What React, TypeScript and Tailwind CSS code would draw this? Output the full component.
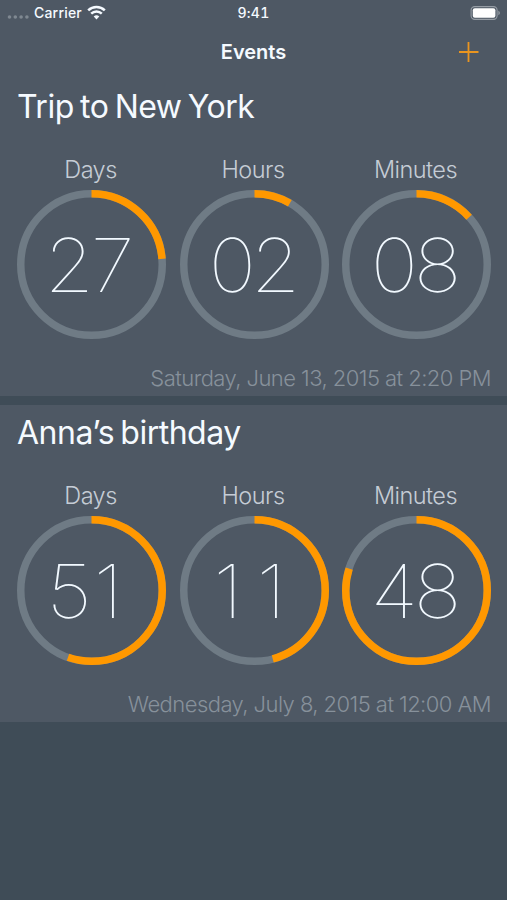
type Counter = {
  label: string;
  value: string;
  progress: number;
};

type CountdownEvent = {
  title: string;
  date: string;
  counters: Counter[];
};

const EVENTS: CountdownEvent[] = [
  {
    title: 'Trip to New York',
    date: 'Saturday, June 13, 2015 at 2:20 PM',
    counters: [
      { label: 'Days', value: '27', progress: 0.237 },
      { label: 'Hours', value: '02', progress: 2 / 24 },
      { label: 'Minutes', value: '08', progress: 8 / 60 },
    ],
  },
  {
    title: 'Anna’s birthday',
    date: 'Wednesday, July 8, 2015 at 12:00 AM',
    counters: [
      { label: 'Days', value: '51', progress: 0.554 },
      { label: 'Hours', value: '11', progress: 11 / 24 },
      { label: 'Minutes', value: '48', progress: 48 / 60 },
    ],
  },
];

// Fixed-width digit slots; the narrow 1 sits a little left of its slot's centre
const DIGIT_SCALE = 1.08;

function digitPositions(value: string) {
  return value
    .split('')
    .map((digit, i) => (52.3 + i * 43.3 - (digit === '1' ? 4.3 : 0)) / DIGIT_SCALE)
    .join(' ');
}

function StatusBar() {
  return (
    <div className="grid h-[26px] grid-cols-3 items-center px-[7px] text-[14px] font-medium">
      <div className="flex items-center">
        <svg width="22" height="4" viewBox="0 0 22 4" className="mt-2 fill-[#7f8891]">
          <circle cx="2.5" cy="2" r="1.8" />
          <circle cx="8.3" cy="2" r="1.8" />
          <circle cx="14.1" cy="2" r="1.8" />
          <circle cx="19.9" cy="2" r="1.8" />
        </svg>
        <span className="mb-px ml-[5px] tracking-[0.2px]">Carrier</span>
        <svg width="19" height="15" viewBox="0 0 19 15" className="mb-px ml-[5px]" fill="none" stroke="currentColor" strokeWidth="2.5">
          <path d="M1.2 5.4a11.9 11.9 0 0 1 16.6 0" />
          <path d="M4.2 8.6a7.6 7.6 0 0 1 10.6 0" />
          <path d="M9.5 14.4 6.7 11.5a4 4 0 0 1 5.6 0z" fill="currentColor" stroke="none" />
        </svg>
      </div>
      <span className="mb-px text-center tracking-[0.3px] tabular-nums">9:41</span>
      <svg width="30" height="14" viewBox="0 0 30 14" className="justify-self-end">
        <rect x="1.1" y="0.6" width="26" height="12.8" rx="3.6" fill="none" stroke="#969da5" strokeWidth="1.1" />
        <rect x="2.8" y="2.3" width="22.6" height="9.4" rx="2" fill="#fff" />
        <path d="M28.4 4.8c1.9.7 1.9 3.7 0 4.4z" fill="#969da5" />
      </svg>
    </div>
  );
}

function NavBar() {
  return (
    <div className="grid h-[52px] grid-cols-3 items-center px-7">
      <h1 className="col-start-2 text-center text-[20px] font-semibold">Events</h1>
      <button className="justify-self-end text-[#ea951f]" aria-label="Add event">
        <svg width="20" height="20" viewBox="0 0 20 20" stroke="currentColor" strokeWidth="1.8">
          <path d="M9.5 0v20M-.5 10h20" />
        </svg>
      </button>
    </div>
  );
}

function Ring({ value, progress }: { value: string; progress: number }) {
  return (
    <svg viewBox="0 0 149 149" className="block w-full" fill="none">
      <circle cx="74.5" cy="74.5" r="70.75" stroke="#6f7b85" strokeWidth="7.5" />
      <circle
        cx="74.5"
        cy="74.5"
        r="70.75"
        stroke="#ff9800"
        strokeWidth="7.5"
        pathLength={1}
        strokeDasharray={`${progress} 1`}
        transform="rotate(-90 74.5 74.5)"
      />
      <text
        x={digitPositions(value)}
        y="101.7"
        transform={`scale(${DIGIT_SCALE} 1)`}
        textAnchor="middle"
        fill="#f2f9ff"
        className="text-[74px] font-thin"
      >
        {value}
      </text>
    </svg>
  );
}

function EventCard({ event }: { event: CountdownEvent }) {
  return (
    <section className="h-[316.5px] bg-[#4e5864] pt-2 pr-4 pl-[17px]">
      <h2 className="text-[32px] leading-10 tracking-[-0.5px] [word-spacing:-2.2px]">{event.title}</h2>
      <div className="mt-[29px] grid grid-cols-3 gap-[13.5px]">
        {event.counters.map((counter) => (
          <div key={counter.label}>
            <p className="mb-[6px] pr-[2px] text-center text-[23.5px] leading-7 font-light tracking-[-0.55px] text-[#c5ccd5]">{counter.label}</p>
            <Ring value={counter.value} progress={counter.progress} />
          </div>
        ))}
      </div>
      <p className="mt-[25px] text-right text-[22px] leading-7 font-light tracking-[-0.55px] whitespace-nowrap text-[#87919b]">{event.date}</p>
    </section>
  );
}

export default function App() {
  return (
    <div className="min-h-screen bg-[#3f4c57] font-['Inter',sans-serif] text-[#f5faff]">
      <header className="bg-[#4e5864] pb-px">
        <StatusBar />
        <NavBar />
      </header>
      <main className="flex flex-col gap-[9.5px]">
        {EVENTS.map((event) => (
          <EventCard key={event.title} event={event} />
        ))}
      </main>
    </div>
  );
}
